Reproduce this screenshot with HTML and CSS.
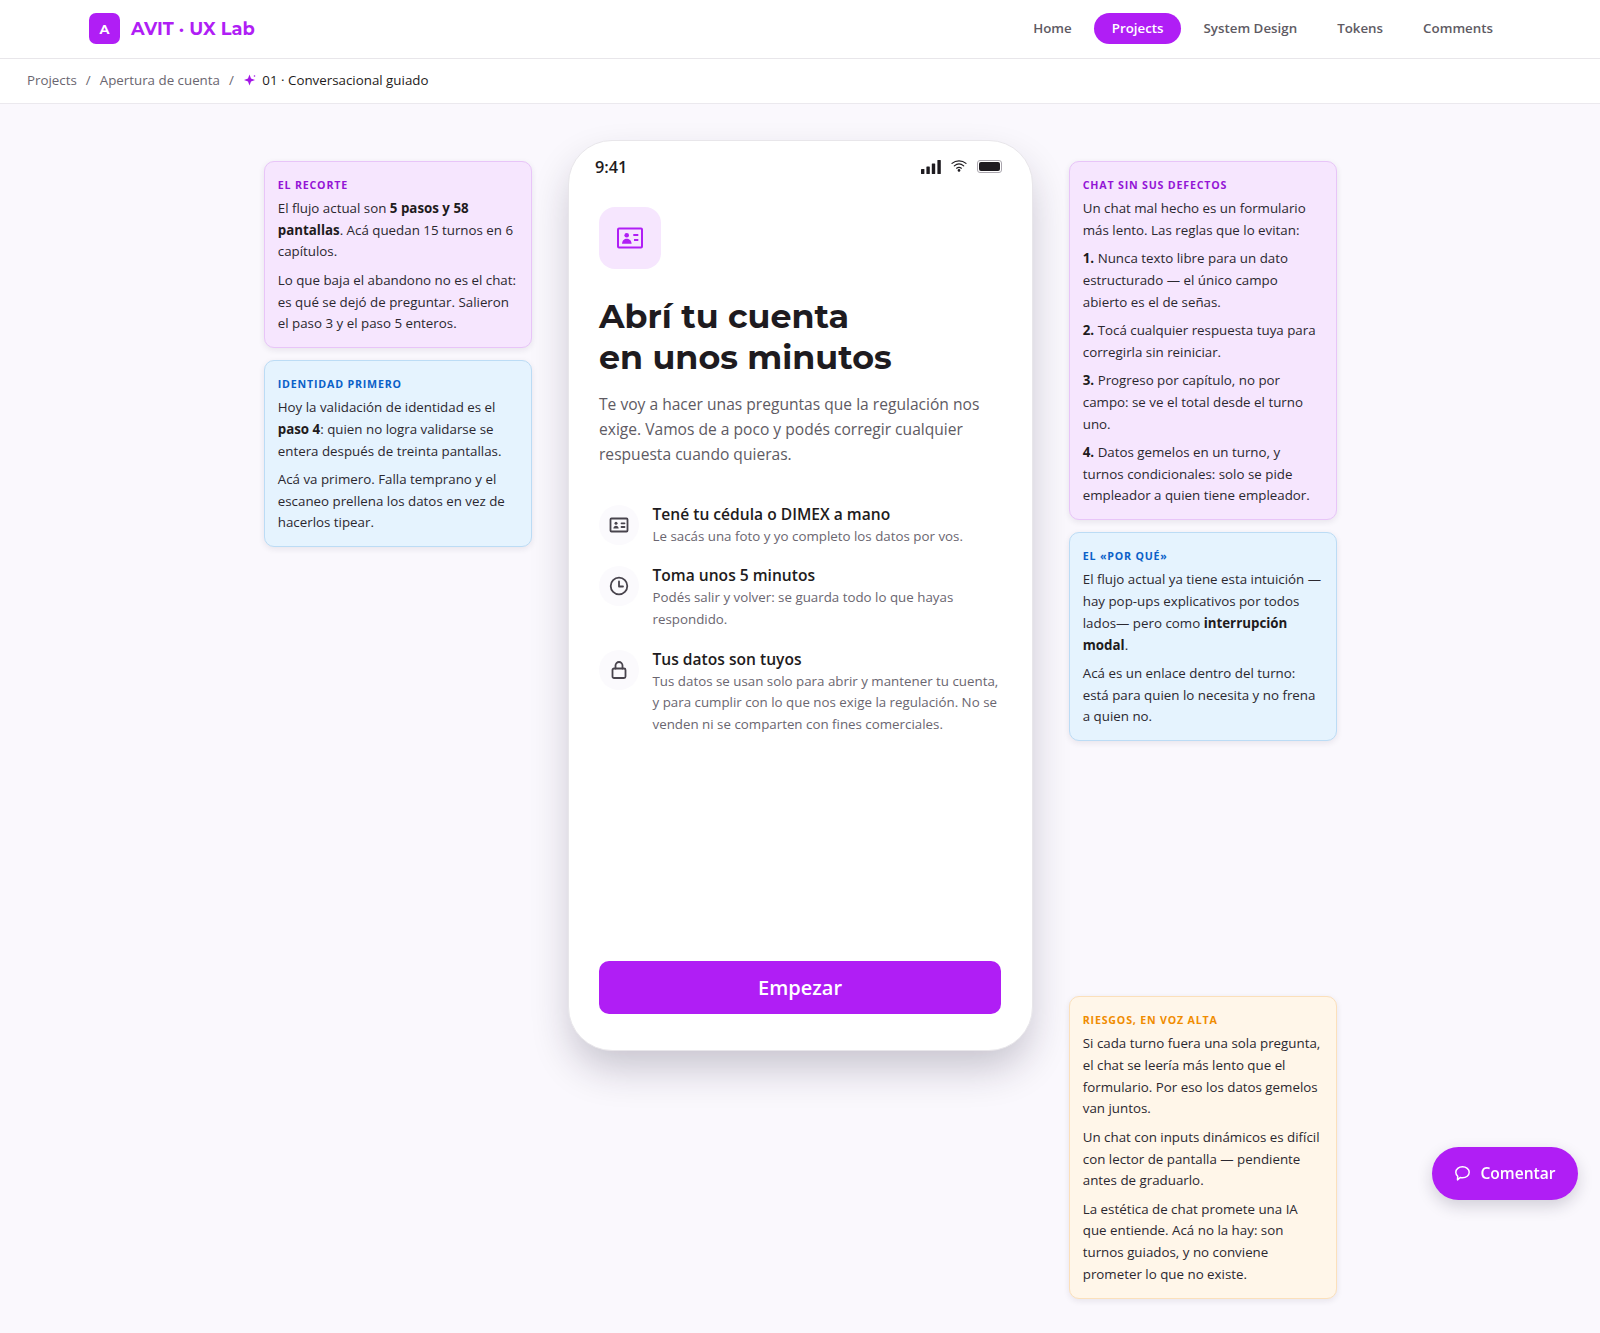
FILE: index.html
```html
<!DOCTYPE html>
<html lang="es">
<head>
<meta charset="utf-8">
<title>AVIT · UX Lab</title>
<link rel="stylesheet" href="styles.css">
</head>
<body>
<header class="topbar">
  <div class="brand"><span class="brand-mark">A</span><span class="brand-name">AVIT · UX Lab</span></div>
  <nav class="nav">
    <a class="nav-link">Home</a>
    <a class="nav-link nav-active">Projects</a>
    <a class="nav-link">System Design</a>
    <a class="nav-link">Tokens</a>
    <a class="nav-link">Comments</a>
  </nav>
</header>
<div class="crumbs">
  <span>Projects</span><span class="sep">/</span><span>Apertura de cuenta</span><span class="sep">/</span>
  <svg class="spark" viewBox="0 0 12 12"><path d="M5.500.5 7 4.500 11 6 7 7.500 5.500 11.500 4 7.500 0 6 4 4.500Z"/><circle cx="10.500" cy="2" r=".8"/></svg>
  <span class="crumb-current">01 · Conversacional guiado</span>
</div>
<main class="stage">
  <aside class="col">
    <section class="note purple">
      <h3>El recorte</h3>
      <p>El flujo actual son <b>5 pasos y 58 pantallas</b>. Acá quedan 15 turnos en 6 capítulos.</p>
      <p>Lo que baja el abandono no es el chat: es qué se dejó de preguntar. Salieron el paso 3 y el paso 5 enteros.</p>
    </section>
    <section class="note blue">
      <h3>Identidad primero</h3>
      <p>Hoy la validación de identidad es el <b>paso 4</b>: quien no logra validarse se entera después de treinta pantallas.</p>
      <p>Acá va primero. Falla temprano y el escaneo prellena los datos en vez de hacerlos tipear.</p>
    </section>
  </aside>
  <section class="phone">
    <div class="status">
      <span class="time">9:41</span>
      <span class="status-icons">
        <svg class="sig" viewBox="0 0 20 14"><rect x="0" y="9" width="3.400" height="5" rx=".6"/><rect x="5.400" y="6.500" width="3.400" height="7.500" rx=".6"/><rect x="10.800" y="3.500" width="3.400" height="10.500" rx=".6"/><rect x="16.400" y="0" width="3.400" height="14" rx=".6"/></svg>
        <svg class="wifi" viewBox="0 0 16 13"><path d="M1 4.400C5 .9 11 .9 15 4.400M3.300 6.900c2.800-2.300 6.600-2.300 9.400 0M5.600 9.200c1.500-1.100 3.300-1.100 4.800 0" fill="none" stroke="#1e1b20" stroke-width="1.200" stroke-linecap="round"/><circle cx="8" cy="11.400" r="1.300" fill="#1e1b20"/></svg>
        <span class="battery"><span class="battery-fill"></span></span>
      </span>
    </div>
    <div class="screen">
      <div class="hero-icon">
        <svg viewBox="0 0 28 24" class="hero-svg"><rect x="2" y="2.500" width="24" height="19" rx="1" fill="none" stroke="#b01ef5" stroke-width="2"/><circle cx="10.700" cy="9.200" r="2.300" fill="#b01ef5"/><path d="M6 17.800c.3-3.600 2.300-5 4.700-5s4.600 1.400 4.900 5Z" fill="#b01ef5"/><rect x="17.300" y="8" width="5" height="2" fill="#b01ef5"/><rect x="18" y="13" width="4.300" height="2" fill="#b01ef5"/></svg>
      </div>
      <h1>Abrí tu cuenta<br>en unos minutos</h1>
      <p class="lead">Te voy a hacer unas preguntas que la regulación nos exige. Vamos de a poco y podés corregir cualquier respuesta cuando quieras.</p>
      <ul class="items">
        <li class="item">
          <span class="item-icon"><svg viewBox="0 0 20 20"><rect x="1.500" y="3.500" width="17" height="13" rx="1"/><circle cx="7" cy="8.300" r="1.500" class="solid"/><path d="M4.300 13.500c.2-1.900 1.300-2.700 2.700-2.700s2.500.8 2.700 2.700Z" class="solid"/><path d="M12.500 8.300h3M12.500 12h3"/></svg></span>
          <div><h2>Tené tu cédula o DIMEX a mano</h2><p>Le sacás una foto y yo completo los datos por vos.</p></div>
        </li>
        <li class="item">
          <span class="item-icon"><svg viewBox="0 0 20 20"><circle cx="10" cy="10" r="8.300"/><path d="M10 5.500V10.500H14"/></svg></span>
          <div><h2>Toma unos 5 minutos</h2><p>Podés salir y volver: se guarda todo lo que hayas respondido.</p></div>
        </li>
        <li class="item">
          <span class="item-icon"><svg viewBox="0 0 20 20"><rect x="3.500" y="8.500" width="13" height="9.500" rx="1.500"/><path d="M6.500 8.500V5.500a3.500 3.500 0 0 1 7 0v3"/></svg></span>
          <div><h2>Tus datos son tuyos</h2><p>Tus datos se usan solo para abrir y mantener tu cuenta, y para cumplir con lo que nos exige la regulación. No se venden ni se comparten con fines comerciales.</p></div>
        </li>
      </ul>
      <button class="cta">Empezar</button>
    </div>
  </section>
  <aside class="col">
    <section class="note purple">
      <h3>Chat sin sus defectos</h3>
      <p>Un chat mal hecho es un formulario más lento. Las reglas que lo evitan:</p>
      <p><b>1.</b> Nunca texto libre para un dato estructurado — el único campo abierto es el de señas.</p>
      <p><b>2.</b> Tocá cualquier respuesta tuya para corregirla sin reiniciar.</p>
      <p><b>3.</b> Progreso por capítulo, no por campo: se ve el total desde el turno uno.</p>
      <p><b>4.</b> Datos gemelos en un turno, y turnos condicionales: solo se pide empleador a quien tiene empleador.</p>
    </section>
    <section class="note blue">
      <h3>El «por qué»</h3>
      <p>El flujo actual ya tiene esta intuición — hay pop-ups explicativos por todos lados— pero como <b>interrupción modal</b>.</p>
      <p>Acá es un enlace dentro del turno: está para quien lo necesita y no frena a quien no.</p>
    </section>
    <section class="note orange note-late">
      <h3>Riesgos, en voz alta</h3>
      <p>Si cada turno fuera una sola pregunta, el chat se leería más lento que el formulario. Por eso los datos gemelos van juntos.</p>
      <p>Un chat con inputs dinámicos es difícil con lector de pantalla — pendiente antes de graduarlo.</p>
      <p>La estética de chat promete una IA que entiende. Acá no la hay: son turnos guiados, y no conviene prometer lo que no existe.</p>
    </section>
  </aside>
</main>
<button class="fab">
  <svg viewBox="0 0 16 16"><path d="M8 1.700c3.500 0 6.300 2.300 6.300 5.200S11.500 12.100 8 12.100c-.8 0-1.500-.1-2.200-.3L3.300 14l.2-3.400C2.400 9.600 1.700 8.300 1.700 6.900 1.700 4 4.500 1.700 8 1.700Z"/></svg>
  Comentar
</button>
</body>
</html>
```
FILE: styles.css
```css
* { box-sizing: border-box; }
html, body { margin: 0; padding: 0; }
body {
  background: #faf8fd;
  color: #1e1b20;
  font-family: "Open Sans", "Liberation Sans", sans-serif;
  min-height: 1333px;
}
.topbar {
  height: 59px;
  background: #fff;
  border-bottom: 1px solid #e8e6ea;
  display: flex;
  align-items: center;
  padding: 0 89px 1px;
  justify-content: space-between;
}
.brand { display: flex; align-items: center; gap: 11px; }
.brand-mark {
  width: 31px; height: 31px; border-radius: 7px;
  background: #b01ef5; color: #fff;
  display: flex; align-items: center; justify-content: center;
  font: 700 13px "Montserrat", Inter, sans-serif;
}
.brand-name { font: 700 17.800px "Montserrat", Inter, sans-serif; color: #b01ef5; }
.nav { display: flex; align-items: center; gap: 5px; margin-right: .5px; }
.nav-link {
  font-size: 13.330px; font-weight: 600; color: #5e5a63;
  padding: 0 17.500px; height: 31px; line-height: 31px; border-radius: 16px;
}
.nav-active { background: #b01ef5; color: #fff; }
.crumbs {
  height: 45px;
  background: #fff;
  border-bottom: 1px solid #ebe9ee;
  display: flex; align-items: center;
  padding: 0 27px 3px;
  font-size: 13.330px; color: #6a6670;
}
.sep { margin: 0 9px; }
.spark { width: 12px; height: 12px; fill: #a316e6; margin: 0 6.500px 0 1px; }
.crumb-current { color: #1e1b20; font-weight: 500; }
.stage {
  display: flex; justify-content: center; align-items: flex-start;
  gap: 35.750px; padding: 36px 0 0 1px;
}
.col { width: 268.500px; padding-top: 21px; display: flex; flex-direction: column; gap: 12px; }
.note {
  border-radius: 10px; border: 1px solid;
  padding: 14px 13px 5.500px;
  font-size: 13.330px; line-height: 21.700px; color: #2b2830;
  box-shadow: 0 2px 6px rgba(30, 20, 50, .09);
}
.note h3 {
  margin: 0 0 4px; font-size: 10.660px; line-height: 18px; font-weight: 700;
  letter-spacing: .8px; text-transform: uppercase;
}
.note p { margin: 0 0 6.750px; }
.note b { font-weight: 700; color: #1e1b20; }
.purple { background: #f6e6fe; border-color: #e8c5f8; }
.purple h3 { color: #9415d6; }
.blue { background: #e5f3fe; border-color: #bcdcf5; }
.blue h3 { color: #0a60c8; }
.orange { background: #fff6e9; border-color: #fbe0bb; }
.orange h3 { color: #f08c00; }
.note-late { margin-top: 243px; }
.phone {
  width: 465px; height: 911px;
  background: #fff; border: 1px solid #e8e6ea; border-radius: 44px;
  box-shadow: 0 20px 40px -4px rgba(30, 20, 50, .24);
  display: flex; flex-direction: column;
}
.status {
  display: flex; justify-content: space-between; align-items: center;
  height: 50px; padding: 1px 30px 0 26px;
}
.time { font-size: 16.300px; font-weight: 550; }
.status-icons { display: flex; align-items: center; gap: 10px; }
.sig { width: 20px; height: 14px; fill: #1e1b20; }
.wifi { width: 16px; height: 13px; margin-top: -2px; }
.battery { width: 25px; height: 13px; border: 1px solid #aaa6ae; border-radius: 3px; padding: 1px; display: flex; }
.battery-fill { flex: 1; background: #1e1b20; border-radius: 2px; }
.screen { flex: 1; display: flex; flex-direction: column; padding: 16px 31px 36px 30px; }
.hero-icon {
  width: 62px; height: 62px; border-radius: 16px; background: #f6e6fe;
  display: flex; align-items: center; justify-content: center;
}
.hero-svg { width: 28px; height: 24px; }
h1 {
  margin: 27px 0 0; font: 700 33.300px/41px "Montserrat", Inter, sans-serif; color: #1e1b20;
}
.lead { margin: 13.500px 0 0; font-size: 15.600px; line-height: 25px; color: #5e5a63; }
.items { list-style: none; margin: 37px 0 0; padding: 0; display: flex; flex-direction: column; gap: 18px; }
.item { display: flex; gap: 13.500px; align-items: flex-start; }
.item-icon {
  flex: none; width: 40px; height: 40px; border-radius: 50%; background: #fbfafd;
  display: flex; align-items: center; justify-content: center; margin-top: 1px;
}
.item-icon svg { width: 20px; height: 20px; fill: none; stroke: #48444d; stroke-width: 1.800; stroke-linecap: round; stroke-linejoin: round; }
.item-icon .solid { fill: #48444d; stroke: none; }
.item h2 { margin: -1px 0 1px; font-size: 15.600px; line-height: 22px; font-weight: 550; color: #1e1b20; }
.item p { margin: 0; font-size: 13.330px; line-height: 21.700px; color: #6a6670; }
.cta {
  margin-top: auto; height: 53px; border: 0; border-radius: 10px; background: #b01ef5; color: #fff;
  font: 550 20px "Open Sans", sans-serif;
}
.fab {
  position: fixed; right: 22px; bottom: 133.500px;
  width: 146px; height: 53px; border: 0; border-radius: 27px; background: #b01ef5; color: #fff;
  font: 550 15.600px "Open Sans", sans-serif;
  display: flex; align-items: center; justify-content: center; gap: 9px;
  box-shadow: 0 6px 16px rgba(30, 20, 50, .18);
}
.fab svg { width: 17px; height: 17px; fill: none; stroke: #fff; stroke-width: 1.400; stroke-linejoin: round; }
```
